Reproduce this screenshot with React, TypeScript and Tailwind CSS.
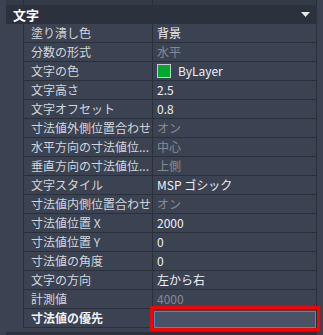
const rows: { label: string; value: string; dim?: boolean; swatch?: boolean }[] = [
  { label: "塗り潰し色", value: "背景" },
  { label: "分数の形式", value: "水平", dim: true },
  { label: "文字の色", value: "ByLayer", swatch: true },
  { label: "文字高さ", value: "2.5" },
  { label: "文字オフセット", value: "0.8" },
  { label: "寸法値外側位置合わせ", value: "オン", dim: true },
  { label: "水平方向の寸法値位...", value: "中心", dim: true },
  { label: "垂直方向の寸法値位...", value: "上側", dim: true },
  { label: "文字スタイル", value: "MSP ゴシック" },
  { label: "寸法値内側位置合わせ", value: "オン", dim: true },
  { label: "寸法値位置 X", value: "2000" },
  { label: "寸法値位置 Y", value: "0" },
  { label: "寸法値の角度", value: "0" },
  { label: "文字の方向", value: "左から右" },
  { label: "計測値", value: "4000", dim: true },
];

export default function App() {
  return (
    <div
      className="w-[323px] h-[335px] overflow-hidden bg-[#3b4352] text-[12px] leading-none"
      style={{ fontFamily: '"Noto Sans CJK JP", "Noto Sans", sans-serif' }}
    >
      <div className="px-[6px]">
        {/* tail of the previous group */}
        <div className="h-[5px] grid grid-cols-[17px_130px_164px] bg-[#343b48]">
          <div />
          <div className="border-l border-r border-[#2a3039]" />
          <div className="border-r border-[#2a3039]" />
        </div>

        {/* group header */}
        <div className="h-[19px] flex items-center justify-between bg-[#2c323d] pl-[7px] pr-[7px]">
          <span className="text-[13px] font-bold text-white">文字</span>
          <svg width="9" height="5" viewBox="0 0 9 5">
            <path d="M0 0h9L4.5 5z" fill="#e6e8eb" />
          </svg>
        </div>

        {rows.map((r) => (
          <Row key={r.label} {...r} />
        ))}

        {/* active row */}
        <div className="h-[19px] grid grid-cols-[17px_130px_164px]">
          <div />
          <div className="flex items-center pl-[7px] border-l border-r border-b border-[#2a3039] font-bold text-[#f2f3f5]">
            寸法値の優先
          </div>
          <div className="relative border-r border-b border-[#2a3039]">
            <div className="absolute left-[1px] top-[2px] right-0 bottom-[-1px] bg-[#4a5365] border border-[#1d9be0]" />
            <div className="absolute -left-[3px] -top-[3px] -right-[4px] -bottom-[4px] border-[3px] border-[#ff0000]" />
          </div>
        </div>

        <div className="h-[4px]" />
        <div className="h-[10px] bg-[#2c323d]" />
      </div>
    </div>
  );
}

function Row({ label, value, dim, swatch }: { label: string; value: string; dim?: boolean; swatch?: boolean }) {
  return (
    <div className="h-[19px] grid grid-cols-[17px_130px_164px]">
      <div />
      <div className="flex items-center pl-[7px] border-l border-r border-b border-[#2a3039] text-[#d3d6db] whitespace-nowrap overflow-hidden">
        {label}
      </div>
      <div
        className={`flex items-center gap-[7px] pl-[4px] border-r border-b border-[#2a3039] whitespace-nowrap ${
          dim ? "text-[#858b95]" : "text-[#eef0f3]"
        }`}
      >
        {swatch && <span className="w-[14px] h-[14px] bg-[#00a82d] border border-[#c8ccd2]" />}
        {value}
      </div>
    </div>
  );
}
